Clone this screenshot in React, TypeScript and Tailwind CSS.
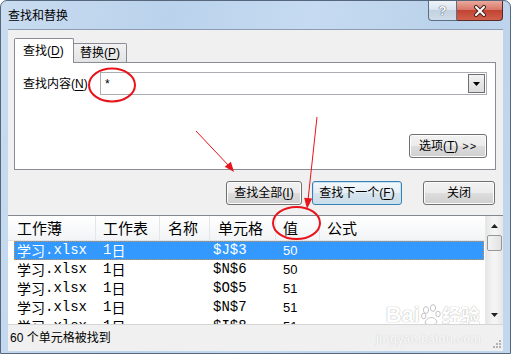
const rows = [
  { cell: '$J$3', value: '50', selected: true },
  { cell: '$N$6', value: '50' },
  { cell: '$O$5', value: '51' },
  { cell: '$N$7', value: '51' },
  { cell: '$I$8', value: '51' },
]

const headers = [
  { label: '工作薄', w: 'w-[88px] pl-[9px]' },
  { label: '工作表', w: 'w-[64px] pl-[7px]' },
  { label: '名称', w: 'w-[50px] pl-[8px]' },
  { label: '单元格', w: 'w-[66px] pl-[8px]' },
  { label: '值', w: 'w-[44px] pl-[7px]' },
  { label: '公式', w: 'flex-1 pl-[7px]' },
]

function WinButton({ children, className = '', focused = false }: { children: React.ReactNode; className?: string; focused?: boolean }) {
  return (
    <div
      className={`flex h-[24px] items-center justify-center rounded-[3px] border text-[12px] ${
        focused
          ? 'border-[#3c7fb1] bg-[linear-gradient(#f3f8fb_0%,#e6eff5_50%,#d6e4ee_51%,#cbdce9_100%)] shadow-[inset_0_0_0_1px_#c4e5f6]'
          : 'border-[#707070] bg-[linear-gradient(#f2f2f2_0%,#ebebeb_50%,#dddddd_51%,#cfcfcf_100%)] shadow-[inset_0_0_0_1px_#fcfcfc]'
      } ${className}`}
    >
      {children}
    </div>
  )
}

export default function App() {
  return (
    <div className="relative h-[354px] w-[511px] overflow-hidden bg-white font-['Liberation_Sans','Noto_Sans_CJK_SC',sans-serif] text-black">
      {/* Window frame */}
      <div className="flex h-full w-full flex-col rounded-t-[7px] border border-[#56677c] bg-[linear-gradient(100deg,#c9dcf0_0%,#bad2ec_30%,#c6dbf1_55%,#b9d1ea_80%,#c2d8ee_100%)]">
        {/* Title bar */}
        <div className="flex h-[28px] items-start justify-between pr-[7px]">
          <span className="pl-[7px] pt-[7px] text-[12px] leading-[16px]">查找和替换</span>
          <div className="flex">
            <div className="flex h-[20px] w-[29px] items-center justify-center rounded-bl-[4px] border border-t-0 border-[#5c6e84] bg-[linear-gradient(#eef3f8_0%,#dbe5ef_45%,#c3d2e1_50%,#cfdce9_100%)]">
              <span className="text-[13px] font-bold leading-none text-white [text-shadow:0_0_1px_#3c4a5a,0_0_1px_#3c4a5a]">?</span>
            </div>
            <div className="flex h-[20px] w-[46px] items-center justify-center rounded-br-[4px] border border-l-0 border-t-0 border-[#5a2b25] bg-[linear-gradient(#e9a99c_0%,#d9786a_45%,#c24332_50%,#d1604c_100%)]">
              <svg width="14" height="12" viewBox="0 0 14 12">
                <path d="M3 2 L11 10 M11 2 L3 10" stroke="#4a2520" strokeWidth="4" strokeLinecap="round" />
                <path d="M3 2 L11 10 M11 2 L3 10" stroke="#ffffff" strokeWidth="2" strokeLinecap="round" />
              </svg>
            </div>
          </div>
        </div>

        {/* Client area */}
        <div className="mx-[7px] mb-[2px] flex flex-1 flex-col border-t border-[#8c9cb1] bg-[#f0f0f0] text-[12px]">
          {/* Tabs */}
          <div className="ml-[6px] mr-[7px] mt-[8px]">
            <div className="flex h-[24px] items-end">
              <div className="relative z-10 -mb-px flex h-[25px] w-[60px] items-center rounded-t-[2px] border border-b-0 border-[#898c95] bg-white pl-[8px]">
                查找(<u className="underline-offset-2">D</u>)
              </div>
              <div className="flex h-[19px] w-[53px] items-center rounded-tr-[2px] border border-b-0 border-l-0 border-[#898c95] bg-[linear-gradient(#f2f2f2,#e3e3e3)] pl-[6px]">
                替换(<u className="underline-offset-2">P</u>)
              </div>
            </div>
            <div className="flex h-[108px] flex-col border border-[#898c95] bg-white px-[8px] pt-[9px]">
              <div className="flex items-center">
                <span className="w-[77px]">
                  查找内容(<u className="underline-offset-2">N</u>):
                </span>
                <div className="flex h-[23px] flex-1 items-center justify-between border border-[#abadb3] bg-white pl-[4px] pr-[1px]">
                  <span className="text-[12px]">*</span>
                  <div className="flex h-[19px] w-[17px] items-center justify-center border border-[#707070] bg-[linear-gradient(#f2f2f2,#dcdcdc)]">
                    <svg width="7" height="4" viewBox="0 0 7 4">
                      <path d="M0 0 H7 L3.5 4 Z" fill="#000" />
                    </svg>
                  </div>
                </div>
              </div>
              <div className="mt-[39px] flex justify-end">
                <WinButton className="w-[78px] gap-[4px]">
                  <span>
                    选项(<u className="underline-offset-2">T</u>)
                  </span>
                  <span className="text-[11px] tracking-[1px]">&gt;&gt;</span>
                </WinButton>
              </div>
            </div>
          </div>

          {/* Action buttons */}
          <div className="mr-[8px] mt-[11px] flex justify-end">
            <WinButton className="w-[76px]">
              查找全部(<u className="underline-offset-2">I</u>)
            </WinButton>
            <WinButton focused className="ml-[10px] w-[90px]">
              查找下一个(<u className="underline-offset-2">F</u>)
            </WinButton>
            <WinButton className="ml-[21px] w-[72px]">关闭</WinButton>
          </div>

          {/* Results list */}
          <div className="mt-[10px] flex h-[109px] shrink-0 border-t border-[#828790] bg-white">
            <div className="relative flex flex-1 flex-col overflow-hidden">
              <div className="flex h-[25px] shrink-0 items-center border-b border-[#e2e3e6] bg-[linear-gradient(#ffffff,#f3f4f6)] text-[15px] font-['Noto_Sans_CJK_SC',sans-serif]">
                {headers.map((h, i) => (
                  <div
                    key={h.label}
                    className={`flex h-full items-center ${h.w} ${i < headers.length - 1 ? 'border-r border-[#e4e6ea]' : ''}`}
                  >
                    {h.label}
                  </div>
                ))}
              </div>
              <div className="flex flex-col">
                {rows.map((r) => (
                  <div
                    key={r.cell}
                    className={`ml-[6px] mr-[1px] flex h-[19px] shrink-0 items-center ${
                      r.selected ? 'bg-[#3399ff] text-white outline-1 outline-dotted outline-[#d89040] -outline-offset-1' : ''
                    }`}
                  >
                    <div className="flex w-[86px] items-center pl-[3px]">
                      <span className="font-['Noto_Sans_CJK_SC',sans-serif] text-[14px]">学习</span>
                      <span className="font-['Liberation_Mono',monospace] text-[14px]">.xlsx</span>
                    </div>
                    <div className="flex w-[110px] items-center pl-[3px]">
                      <span className="font-['Liberation_Mono',monospace] text-[14px]">1</span>
                      <span className="font-['Noto_Sans_CJK_SC',sans-serif] text-[14px]">日</span>
                    </div>
                    <div className="w-[70px] pl-[3px] font-['Liberation_Mono',monospace] text-[14px]">{r.cell}</div>
                    <div className="pl-[3px] text-[13px]">{r.value}</div>
                  </div>
                ))}
              </div>

              {/* Watermark */}
              <div className="pointer-events-none absolute bottom-[-3px] right-[5px] flex flex-col items-center text-white">
                <div className="flex items-end gap-[1px] text-[22px] font-bold leading-[24px] [text-shadow:0_0_1px_#b8b8b8,0_0_1px_#b8b8b8]">
                  <span>Bai</span>
                  <svg width="20" height="22" viewBox="0 0 20 22" className="mb-[1px]">
                    <g fill="#fff" stroke="#c4c4c4" strokeWidth="1">
                      <ellipse cx="5" cy="6" rx="2.6" ry="3.4" />
                      <ellipse cx="12" cy="4" rx="2.6" ry="3.4" />
                      <ellipse cx="2.8" cy="12" rx="2.2" ry="2.8" />
                      <ellipse cx="17" cy="10" rx="2.2" ry="2.8" />
                      <path d="M4 19 C5 13 14 11 16 18 C16 21 6 22 4 19 Z" />
                    </g>
                  </svg>
                  <span className="font-['Noto_Sans_CJK_SC',sans-serif] text-[19px]">经验</span>
                </div>
              </div>
            </div>

            {/* Scrollbar */}
            <div className="flex w-[18px] flex-col border-l border-[#e8e8e8] bg-[linear-gradient(90deg,#e6e6e6,#f4f4f4_40%,#f4f4f4_60%,#e6e6e6)]">
              <div className="flex h-[19px] items-center justify-center">
                <svg width="7" height="4" viewBox="0 0 7 4">
                  <path d="M0 4 H7 L3.5 0 Z" fill="#222" />
                </svg>
              </div>
              <div className="mx-[1px] h-[16px] rounded-[2px] border border-[#979797] bg-[linear-gradient(90deg,#f4f4f4,#e2e2e2)]" />
              <div className="flex-1" />
              <div className="flex h-[18px] items-center justify-center">
                <svg width="7" height="4" viewBox="0 0 7 4">
                  <path d="M0 0 H7 L3.5 4 Z" fill="#222" />
                </svg>
              </div>
            </div>
          </div>

          {/* Status bar */}
          <div className="relative flex flex-1 items-center border-t border-[#d5d5d5] bg-[#f0f0f0] pl-[2px] text-[12px]">
            60 个单元格被找到
            <span className="pointer-events-none absolute right-[22px] top-[5px] text-[12px] font-bold text-[#f6f6f6] [text-shadow:0_0_1px_#c6c6c6]">
              jingyan.baidu.com
            </span>
            <svg width="10" height="10" viewBox="0 0 10 10" className="absolute bottom-[2px] right-[1px]">
              <g fill="#b3b3b3">
                <rect x="7" y="1" width="2" height="2" />
                <rect x="4" y="4" width="2" height="2" />
                <rect x="7" y="4" width="2" height="2" />
                <rect x="1" y="7" width="2" height="2" />
                <rect x="4" y="7" width="2" height="2" />
                <rect x="7" y="7" width="2" height="2" />
              </g>
            </svg>
          </div>
        </div>
      </div>

      {/* Red annotations */}
      <svg className="pointer-events-none absolute left-0 top-0" width="511" height="354" viewBox="0 0 511 354">
        <ellipse cx="112" cy="85" rx="23" ry="16.5" fill="none" stroke="#e8141b" strokeWidth="2" />
        <ellipse cx="296.5" cy="223" rx="23.5" ry="16" fill="none" stroke="#e8141b" strokeWidth="2" />
        <line x1="196" y1="131" x2="230" y2="167" stroke="#e8141b" strokeWidth="1" />
        <polygon points="234,172 224.7,166.7 230.9,161.7" fill="#e8141b" />
        <line x1="317" y1="117" x2="308" y2="200" stroke="#e8141b" strokeWidth="1" />
        <polygon points="307,209 312.2,198.5 304.2,197.7" fill="#e8141b" />
      </svg>
    </div>
  )
}
